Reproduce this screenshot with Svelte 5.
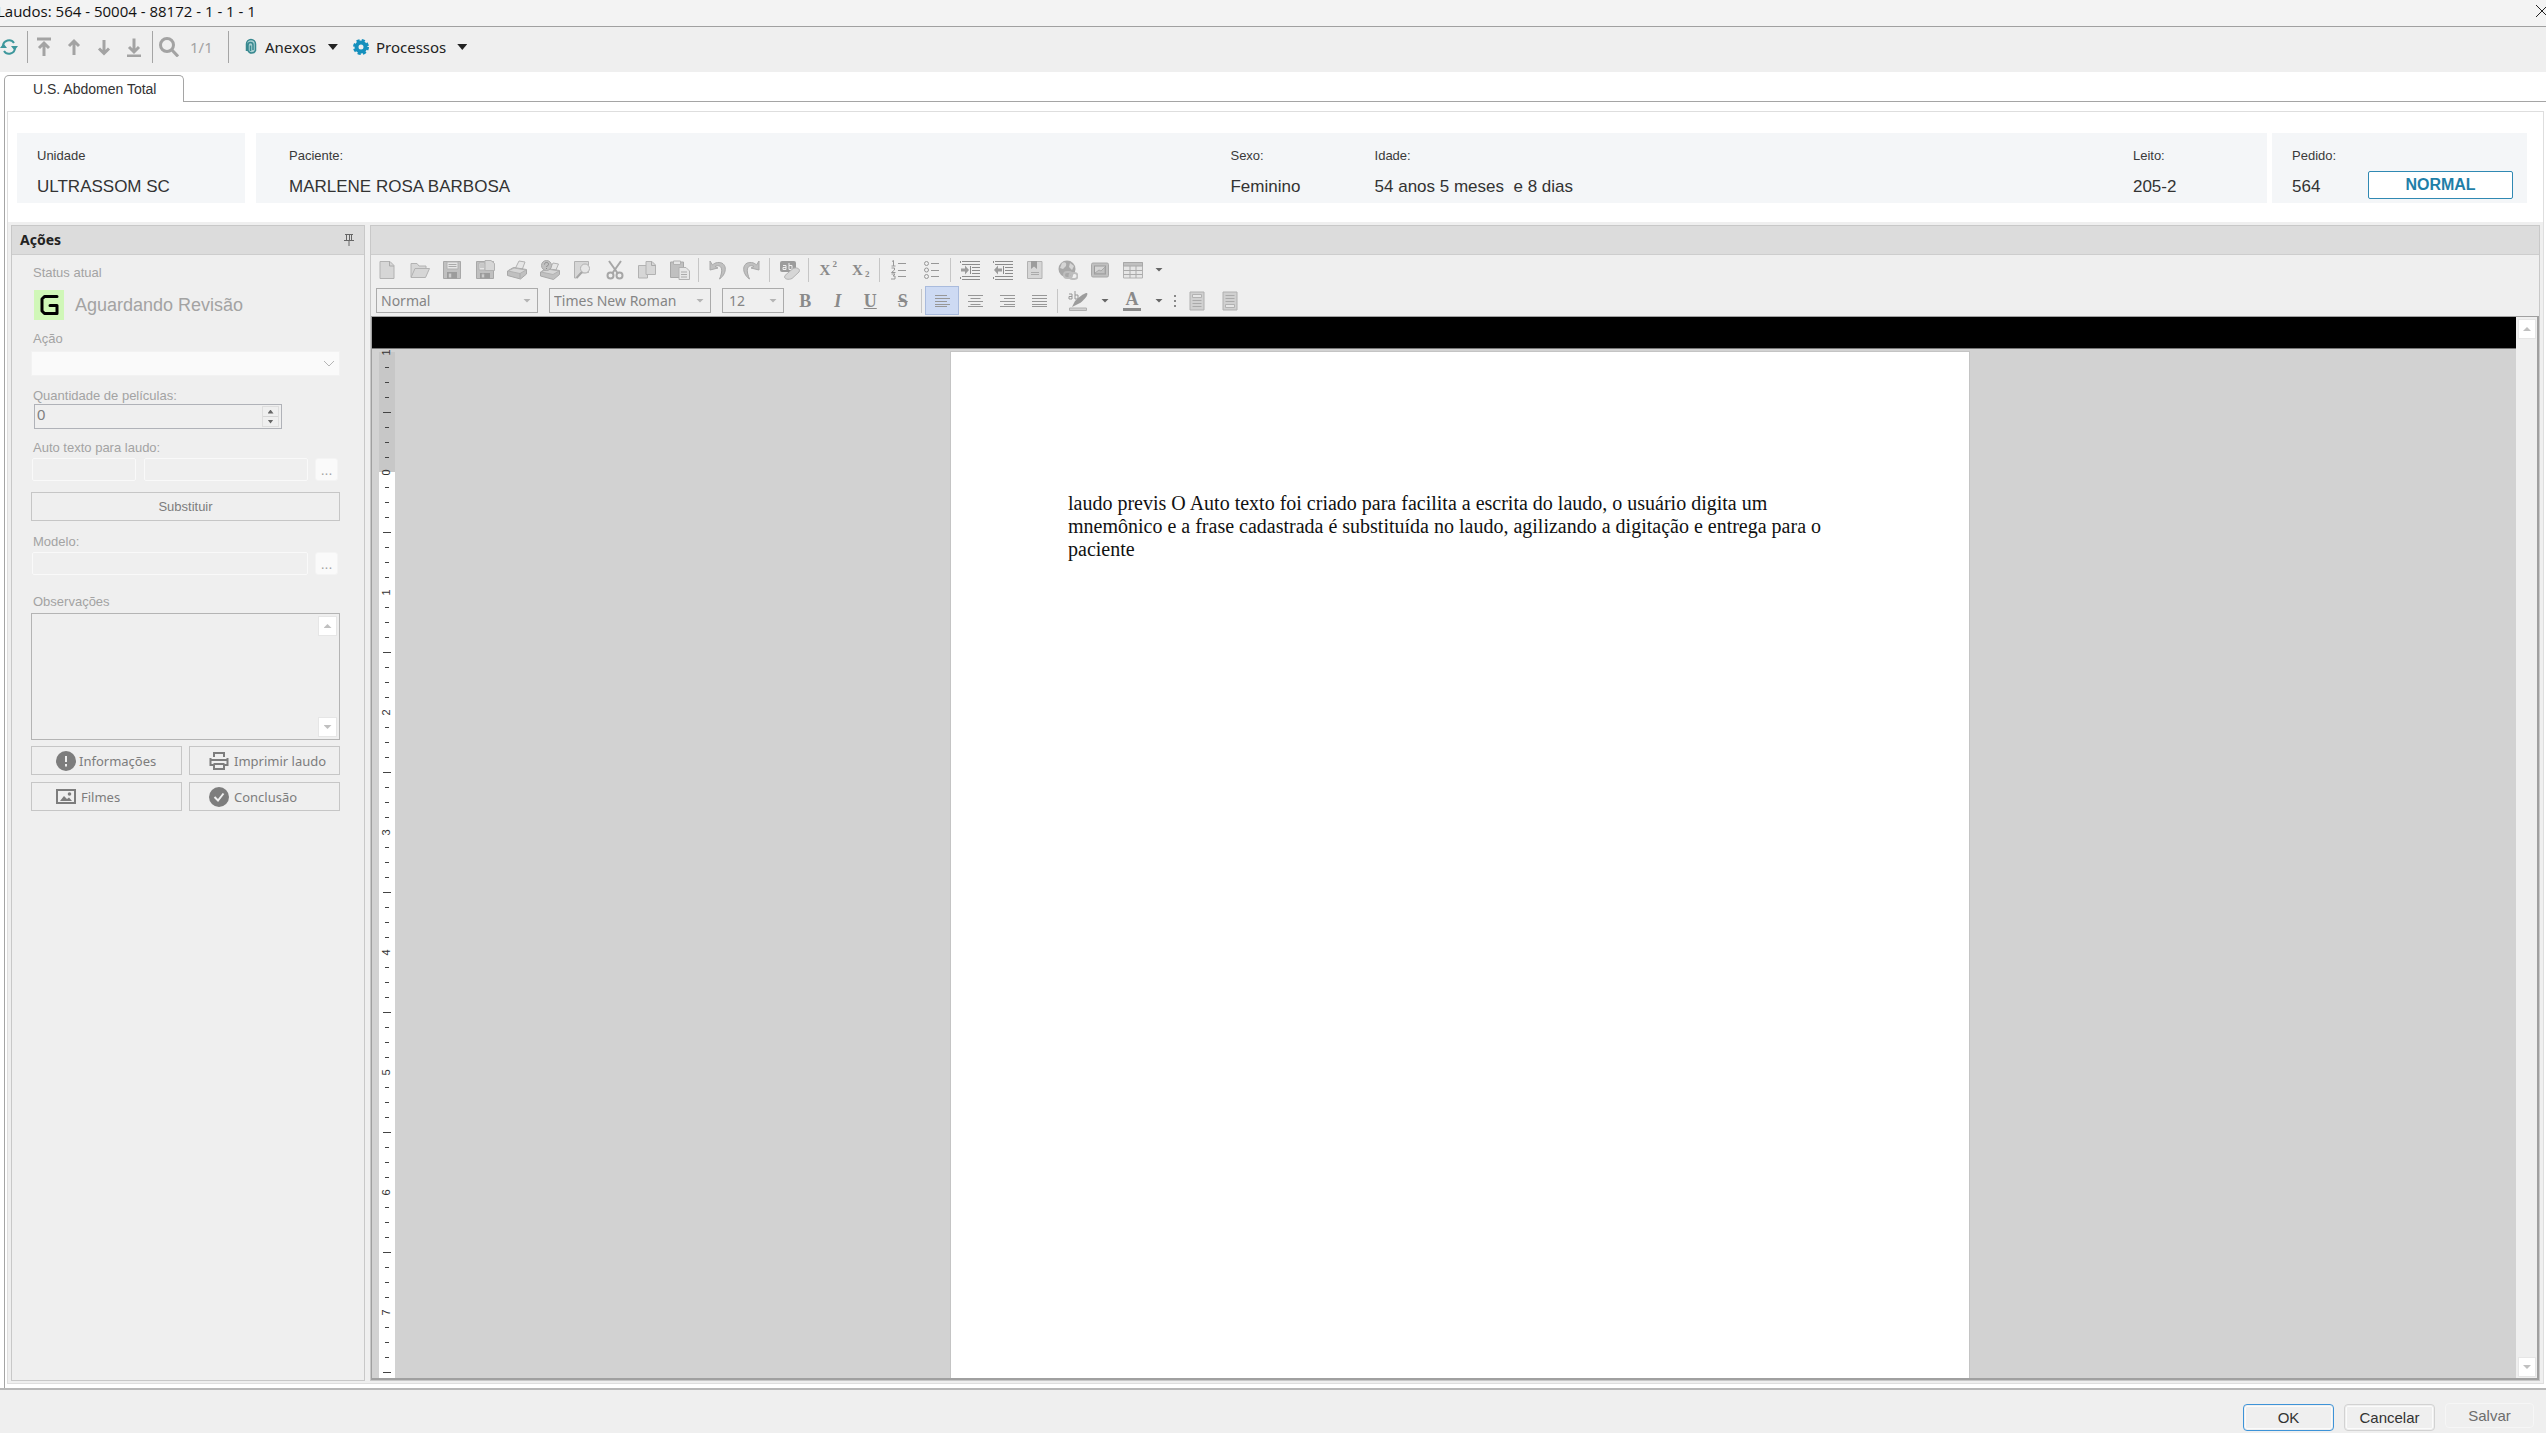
<script>
  const fileTools = [
    ['new', 'Novo'], ['open', 'Abrir'], ['save', 'Salvar documento'], ['saveas', 'Salvar como'],
    ['print', 'Imprimir'], ['quickprint', 'Impressão rápida'], ['preview', 'Visualizar'],
    ['cut', 'Recortar'], ['copy', 'Copiar'], ['paste', 'Colar']
  ];
  const insertTools = [
    ['outdent', 'Diminuir recuo'], ['indent', 'Aumentar recuo'], ['bookmark', 'Indicador'],
    ['link', 'Hiperlink'], ['image', 'Imagem'], ['table', 'Tabela']
  ];
  const aligns = [
    ['left', 'Alinhar à esquerda'], ['center', 'Centralizar'],
    ['right', 'Alinhar à direita'], ['justify', 'Justificar']
  ];
  const nav = [
    ['first', 'Primeiro'], ['prev', 'Anterior'], ['next', 'Próximo'], ['last', 'Último']
  ];
  const marks = Array.from({ length: 69 }, (_, i) => ({
    label: i % 8 === 0 ? Math.abs(i / 8 - 1) : null,
    long: i % 8 === 4
  }));

  let quantity = $state(0);
  let align = $state('left');
</script>

{#snippet icon(name)}
  <svg class="ico" viewBox="0 0 20 20" width="20" height="20" aria-hidden="true">
    {#if name === 'new'}
      <path class="lite" d="M3 1.500h10l4 4v13h-14z" /><path class="edge" d="M12.500 1.500v4.500h4.500" />
    {:else if name === 'open'}
      <path class="lite" d="M1 17V3.500h6l2 2.500h7v4" /><path class="lite" d="M1 17.500l4-9h14.500l-4 9z" />
    {:else if name === 'save'}
      <path class="mid" d="M1.500 1.500h17v17h-17z" /><path class="pale" d="M5 2h11v7h-11z" /><path class="edge" d="M6.500 4.500h8M6.500 6.500h8" /><path class="deep" d="M5 12h10v6.500h-10z" /><path class="pale" d="M7 13.500h2v4h-2z" />
    {:else if name === 'saveas'}
      <path class="mid" d="M1.500 1.500h17v17h-17z" /><path class="pale" d="M4 3h6v7h-6z" /><path class="edge" d="M5 5h4M5 7h4" /><path class="deep" d="M5 13h10v5.500h-10z" /><path class="pale" d="M7 14h2v3.500h-2z" /><path class="lite" d="M10 .5h6l3.500 3v7h-9.500z" />
    {:else if name === 'print'}
      <path class="pale" d="M8 9l4-8 6 1-3 8z" /><path class="mid" d="M.5 11l6-3.500 13 2v4.500l-6 5-13-3.500z" /><path class="lite" d="M1 11l6-3 12 2-6 3.500z" /><path class="edge" d="M13 13.500v5" />
    {:else if name === 'quickprint'}
      <path class="pale" d="M10 9l3-6 5.500 1-3 7z" /><path class="mid" d="M.5 12l6-3.500 13 2v4l-6 5-13-3.500z" /><path class="lite" d="M1 12l6-3 12 2-6 3.500z" /><circle class="mid" cx="6.500" cy="5.500" r="5" /><path class="darkline" d="M4.500 4.500c0-3 4.500-2.500 4 0 0 1.500-2 1-2 2.500M6.500 8v1" />
    {:else if name === 'preview'}
      <path class="lite" d="M2.500 1.500h14v11l-8 .5-4 5h-2z" /><circle class="pale" cx="13" cy="8.500" r="4.500" /><path class="line2" d="M10 12l-5.500 6" />
    {:else if name === 'cut'}
      <path class="line2" d="M4 1l8.500 12M16 1L7.500 13" /><circle class="line2" cx="5.500" cy="15.500" r="3" /><circle class="line2" cx="14.500" cy="15.500" r="3" />
    {:else if name === 'copy'}
      <path class="lite" d="M1.500 5.500h9v12.500h-9z" /><path class="lite" d="M9 1.500h6l3.500 3.500v9.500h-9.500z" /><path class="edge" d="M14.500 1.500v4h4" />
    {:else if name === 'paste'}
      <path class="mid" d="M.5 2h13v15.500h-13z" /><path class="pale" d="M3.500 1h7v3.500h-7z" /><path class="pale" d="M9 7.500h7l3.500 3.500v8.500h-10.500z" /><path class="edge" d="M11 12h6M11 14.500h6M11 17h6" />
    {:else if name === 'undo'}
      <path class="mid" d="M2 1v9l8-2-3-1.500c5-2.500 9.500 1 4.500 12.500C20 13 19 1.500 9.500 2.500 7.500 2.800 6 3.500 4.500 5z" />
    {:else if name === 'redo'}
      <path class="mid" d="M18 1v9l-8-2 3-1.500C8 4 3.500 7.500 8.500 19 0 13 1 1.500 10.500 2.500c2 .3 3.500 1 5 2.500z" />
    {:else if name === 'spell'}
      <rect class="deep" x="0" y="1" width="16" height="11" rx="2" /><path class="whiteline" d="M3 5.500h3v4h-3v-2h3M9 3v6.500h3v-4h-3" /><path class="lite" d="M5 15.500l8-7c3-1.500 8 0 6 3.500l-7 6.500c-3 1.500-9 1-7-3z" />
    {:else if name === 'numbers'}
      <path class="line" d="M3 1.500l1.500-1V6M2.500 6h4M2.500 8h3v2l-3 2.500h4M2.500 14h3.500l-2 2h2v3h-4M9 3.500h8M9 10.500h8M9 16.500h8" />
    {:else if name === 'bullets'}
      <circle class="line" cx="4.500" cy="3.500" r="2" /><circle class="line" cx="4.500" cy="10" r="2" /><circle class="line" cx="4.500" cy="16.500" r="2" /><path class="line" d="M9 3.500h8M9 10.500h8M9 16.500h8" />
    {:else if name === 'outdent' || name === 'indent'}
      <path class="darkline" d="M.5 1v2M.5 17v2M2 1.500h18M2 4.500h18M12 7.500h8M12 10.500h8M12 13.500h8M2 16.500h18M2 19.500h18M10.500 6v8" />
      {#if name === 'outdent'}<path class="deep" d="M1 8.500h4v-3l4 4.500-4 4.500v-3h-4z" />{:else}<path class="deep" d="M9 8.500H5v-3L1 10l4 4.500v-3h4z" />{/if}
    {:else if name === 'bookmark'}
      <path class="lite" d="M2.500 1.500h14.500v17h-14.500z" /><path class="deep" d="M6 1h6v8l-3-2.500-3 2.500z" /><path class="edge" d="M6 12.500h8M6 14.500h8" />
    {:else if name === 'link'}
      <circle class="globe" cx="9" cy="9" r="8.500" /><path class="palefill" d="M4 3c3-2 5 0 4 3l-3 3-3-1zM12 3l4 3-2 4-3-3z" /><rect class="link" x="6" y="12" width="8" height="6" rx="3" /><rect class="link" x="11.500" y="13" width="8" height="6" rx="3" />
    {:else if name === 'image'}
      <rect class="mid" x="1.500" y="3" width="17" height="14" rx="1.500" /><path class="deep" d="M4 5.500h12v9h-12z" /><path class="palefill" d="M5 6.500h10v7h-10z" /><path class="mid" d="M5 13l4-3 2 1 4-4v6.500h-10z" />
    {:else if name === 'table'}
      <path class="pale" d="M.5 2.500h19v15.500h-19z" /><path class="mid" d="M.5 2.500h19v3.500h-19z" /><path class="edge" d="M.5 10.500h19M.5 14.500h19M7 6v12M13 6v12" />
    {:else if name === 'left'}
      <path class="line" d="M3 4.500h12M3 7.500h15M3 10.500h12M3 13.500h15M3 15.500h12" />
    {:else if name === 'center'}
      <path class="line" d="M3 4.500h15M5.500 7.500h10M3 10.500h15M5.500 13.500h10M3 15.500h15" />
    {:else if name === 'right'}
      <path class="line" d="M3 4.500h15M7 7.500h11M3 10.500h15M7 13.500h11M3 15.500h15" />
    {:else if name === 'justify'}
      <path class="line" d="M3 4.500h15M3 7.500h15M3 10.500h15M3 13.500h15M3 15.500h15" />
    {:else if name === 'header'}
      <path class="leaf" d="M3 1h14v18h-14z" /><path class="pale" d="M5.500 3.500h9v3h-9z" /><path class="edge" d="M5.500 9.500h9M5.500 12.500h9M5.500 15.500h9" />
    {:else if name === 'footer'}
      <path class="leaf" d="M3 1h14v18h-14z" /><path class="pale" d="M5.500 13.500h9v3h-9z" /><path class="edge" d="M5.500 4.500h9M5.500 7.500h9M5.500 10.500h9" />
    {:else if name === 'first'}
      <path class="nav" d="M3 2h14M10 19V6M5 11l5-5 5 5" />
    {:else if name === 'prev'}
      <path class="nav" d="M10 18V4M5 9l5-5 5 5" />
    {:else if name === 'next'}
      <path class="nav" d="M10 3v13M5 11.500l5 5 5-5" />
    {:else if name === 'last'}
      <path class="nav" d="M3 19h14M10 1.500V14M5 10l5 5 5-5" />
    {:else if name === 'search'}
      <circle class="nav" cx="8" cy="8" r="6.500" /><path class="nav" d="M12.500 12.500l6.500 7" />
    {/if}
  </svg>
{/snippet}

{#snippet tool(name, label)}
  <button class="tool" type="button" aria-label={label}>{@render icon(name)}</button>
{/snippet}

<div class="window">
  <header class="title">
    <span>Laudos: 564 - 50004 - 88172 - 1 - 1 - 1</span>
    <button type="button" class="close" aria-label="Fechar">
      <svg viewBox="0 0 10 12" width="10" height="12"><path d="M0 0l12 12M12 0L0 12" /></svg>
    </button>
  </header>

  <nav class="main-tools">
    <button type="button" class="refresh" aria-label="Atualizar">
      <svg viewBox="0 0 18 16" width="18" height="16"><path d="M3 7a6 6 0 0 1 11-3M15 9a6 6 0 0 1-11 3" /><path class="solid" d="M0 9h7L3.500 4.500zM11 7h7L14.500 11.500z" /></svg>
    </button>
    <i class="bar"></i>
    <div class="navs">{#each nav as [n, l]}{@render tool(n, l)}{/each}</div>
    <i class="bar"></i>
    <button type="button" class="tool find" aria-label="Localizar">{@render icon('search')}</button>
    <span class="count">1/1</span>
    <i class="bar"></i>
    <button type="button" class="menu">
      <svg viewBox="0 0 12 18" width="12" height="18"><path d="M1.500 13V6a4.500 4.500 0 0 1 9 0v6.500a4 4 0 0 1-7.500 0V7a2.500 2.500 0 0 1 5 0v5" fill="#a9cfd1" stroke="#37888f" stroke-width="1.500" /><path d="M5.500 7.500V13" stroke="#37888f" stroke-width="1.500" /></svg>
      <span>Anexos</span><b class="caret big"></b>
    </button>
    <button type="button" class="menu">
      <svg viewBox="0 0 16 16" width="16" height="16"><circle cx="8" cy="8" r="4.500" fill="none" stroke="#1590bd" stroke-width="4" /><circle cx="8" cy="8" r="6.500" fill="none" stroke="#1590bd" stroke-width="3" stroke-dasharray="3 2.100" /></svg>
      <span>Processos</span><b class="caret big"></b>
    </button>
  </nav>

  <main class="tabs">
    <div class="tab-row"><button type="button" class="tab">U.S. Abdomen Total</button><div class="tab-line"></div></div>
    <div class="sheet">
      <div class="inner">
        <section class="info">
          <dl class="card unit"><div><dt>Unidade</dt><dd>ULTRASSOM SC</dd></div></dl>
          <dl class="card patient">
            <div><dt>Paciente:</dt><dd>MARLENE ROSA BARBOSA</dd></div>
            <div><dt>Sexo:</dt><dd>Feminino</dd></div>
            <div><dt>Idade:</dt><dd>54 anos 5 meses&nbsp; e 8 dias</dd></div>
            <div><dt>Leito:</dt><dd>205-2</dd></div>
          </dl>
          <div class="card order">
            <dl><div><dt>Pedido:</dt><dd>564</dd></div></dl>
            <button type="button" class="priority">NORMAL</button>
          </div>
        </section>

        <div class="work">
          <aside class="panel actions">
            <h2 class="panel-head">Ações
              <svg viewBox="0 0 10 12" width="10" height="12"><path d="M1 .5h8M2.500 1v5.500M7.500 1v5.500M5.500 1v5.500M0 6.500h10M5 7v5" /></svg>
            </h2>
            <div class="form">
              <p class="lbl">Status atual</p>
              <div class="status">
                <svg viewBox="0 0 30 30" width="30" height="30"><path fill="#d0f7b8" d="M0 0h30v30H0z" /><path fill="none" stroke="#000" stroke-width="3" stroke-linecap="round" stroke-linejoin="round" d="M23 6.500H10.500L8 9v12l2.500 2.500H23V15.500h-7" /></svg>
                <span>Aguardando Revisão</span>
              </div>
              <label class="lbl" for="acao">Ação</label>
              <div class="pick">
                <select id="acao"><option></option></select>
                <svg viewBox="0 0 12 8" width="12" height="8"><path d="M1 1l5 5 5-5" /></svg>
              </div>
              <label class="lbl qty-l" for="qtd">Quantidade de películas:</label>
              <div class="spin">
                <input id="qtd" type="number" bind:value={quantity} />
                <div class="steps">
                  <button type="button" aria-label="Aumentar" onclick={() => quantity++}><b class="caret up"></b></button>
                  <button type="button" aria-label="Diminuir" onclick={() => quantity--}><b class="caret"></b></button>
                </div>
              </div>
              <label class="lbl auto-l" for="auto">Auto texto para laudo:</label>
              <div class="lookup">
                <input id="auto" class="code" type="text" /><input class="desc" type="text" aria-label="Descrição do auto texto" />
                <button type="button" aria-label="Procurar auto texto">...</button>
              </div>
              <button type="button" class="flat wide">Substituir</button>
              <label class="lbl model-l" for="modelo">Modelo:</label>
              <div class="lookup"><input id="modelo" class="desc" type="text" /><button type="button" aria-label="Procurar modelo">...</button></div>
              <label class="lbl obs-l" for="obs">Observações</label>
              <div class="obs">
                <textarea id="obs"></textarea>
                <div class="scroll"><button type="button" aria-label="Rolar para cima"><b class="caret up"></b></button><button type="button" aria-label="Rolar para baixo"><b class="caret"></b></button></div>
              </div>
              <div class="grid">
                <button type="button" class="flat info-b">
                  <svg viewBox="0 0 20 20" width="20" height="20"><circle cx="10" cy="10" r="10" /><path class="w" d="M10 5v6M10 13v2.500" /></svg>Informações</button>
                <button type="button" class="flat print-b">
                  <svg viewBox="0 0 20 20" width="20" height="20"><path class="s" d="M5 6V2h10v4M1.500 15V7M18.500 15V7M1 9h18M5 12.500V18h10v-5.500M1 14h3M16 14h3M5 13h10" /></svg>Imprimir laudo</button>
                <button type="button" class="flat film-b">
                  <svg viewBox="0 0 20 20" width="20" height="20"><path class="s" d="M1 3h18v13H1z" /><path d="M4 14l4-5 3 3 2-1.500 3 3.500z" /><circle cx="13.500" cy="7" r="1.800" /></svg>Filmes</button>
                <button type="button" class="flat done-b">
                  <svg viewBox="0 0 20 20" width="20" height="20"><circle cx="10" cy="10" r="10" /><path class="w" d="M5.500 10l3.500 3.500L14.500 6.500" /></svg>Conclusão</button>
              </div>
            </div>
          </aside>

          <section class="panel editor">
            <div class="panel-head"></div>
            <div class="strip">
              <div class="g g10">{#each fileTools as [n, l]}{@render tool(n, l)}{/each}</div>
              <i class="sep"></i>
              <div class="g g2">{@render tool('undo', 'Desfazer')}{@render tool('redo', 'Refazer')}</div>
              <i class="sep"></i>
              <div class="g g1">{@render tool('spell', 'Ortografia')}</div>
              <i class="sep"></i>
              <div class="g g2">
                <button type="button" class="tool script">X<sup>2</sup></button>
                <button type="button" class="tool script">X<sub>2</sub></button>
              </div>
              <i class="sep"></i>
              <div class="g g2">{@render tool('numbers', 'Numeração')}{@render tool('bullets', 'Marcadores')}</div>
              <i class="sep"></i>
              <div class="g g6">{#each insertTools as [n, l]}{@render tool(n, l)}{/each}</div>
              <button type="button" class="drop" aria-label="Mais opções de tabela"><b class="caret"></b></button>
            </div>
            <div class="strip second">
              <div class="combo"><select aria-label="Estilo"><option>Normal</option></select><b class="caret soft"></b></div>
              <div class="combo"><select aria-label="Fonte"><option>Times New Roman</option></select><b class="caret soft"></b></div>
              <div class="combo size"><select aria-label="Tamanho"><option>12</option></select><b class="caret soft"></b></div>
              <div class="g g4 letters">
                <button type="button" class="tool"><b>B</b></button>
                <button type="button" class="tool"><em>I</em></button>
                <button type="button" class="tool"><u>U</u></button>
                <button type="button" class="tool"><s>S</s></button>
              </div>
              <i class="sep"></i>
              <div class="g g4">
                {#each aligns as [n, l]}
                  <button type="button" class="tool" class:on={align === n} aria-label={l} onclick={() => (align = n)}>{@render icon(n)}</button>
                {/each}
              </div>
              <i class="sep"></i>
              <button type="button" class="tool mark" aria-label="Realce">
                <svg viewBox="0 0 20 20" width="20" height="20"><path class="line" d="M1 3h3v5H1V5.500h3M7 0v8h3V4H7" /><path class="deep" d="M19 2c2 2-4 8-7 10l-8 4 3-6c3-3 10-9 12-8z" /><path class="leaf" d="M1.500 17h17v2.500h-17z" /></svg>
              </button>
              <button type="button" class="drop" aria-label="Cores de realce"><b class="caret"></b></button>
              <button type="button" class="tool color"><span>A</span></button>
              <button type="button" class="drop" aria-label="Cores da fonte"><b class="caret"></b></button>
              <svg class="dots" viewBox="0 0 4 14" width="4" height="14"><path d="M1 1h2v2H1zM1 6h2v2H1zM1 11h2v2H1z" /></svg>
              <div class="g g2">{@render tool('header', 'Cabeçalho')}{@render tool('footer', 'Rodapé')}</div>
            </div>
            <div class="canvas">
              <div class="view">
                <div class="black"></div>
                <div class="stage">
                  <div class="ruler">
                    {#each marks as m}
                      <div class="m" class:long={m.long}>{#if m.label !== null}<span>{m.label}</span>{:else}<i></i>{/if}</div>
                    {/each}
                  </div>
                  <div class="desk">
                    <article class="page" contenteditable="true" spellcheck="false">
                      <p>laudo previs O Auto texto foi criado para facilita a escrita do laudo, o usuário digita um<br />mnemônico e a frase cadastrada é substituída no laudo, agilizando a digitação e entrega para o<br />paciente</p>
                    </article>
                  </div>
                </div>
              </div>
              <div class="scroll tall"><button type="button" aria-label="Página acima"><b class="caret up"></b></button><button type="button" aria-label="Página abaixo"><b class="caret"></b></button></div>
            </div>
          </section>
        </div>
      </div>
    </div>
  </main>

  <footer>
    <button type="button" class="ok">OK</button>
    <button type="button">Cancelar</button>
    <button type="button" class="off">Salvar</button>
  </footer>
</div>

<style>
  :global(body) { margin: 0; overflow: hidden; }
  * { box-sizing: border-box; }
  .window { display: flex; flex-direction: column; height: 100vh; background: #efefef; font: 14px/16px "Liberation Sans", Arial, sans-serif; color: #333; }
  button, input, select, textarea { font: inherit; color: inherit; background: none; border: 0; padding: 0; margin: 0; border-radius: 0; min-width: 0; outline: none; }
  select { appearance: none; }
  h2, p, dl, dt, dd { margin: 0; font-weight: normal; }
  svg { display: block; flex: none; }

  .title { display: flex; justify-content: space-between; align-items: center; height: 27px; flex: none; background: #f3f3f3; border-bottom: 1px solid #a0a0a0; color: #111; font: 15px/22px "Open Sans", sans-serif; padding-bottom: 5px; }
  .title span { margin-left: -3px; }
  .close path { stroke: #222; fill: none; }

  .main-tools { display: flex; align-items: center; height: 45px; flex: none; padding-bottom: 5px; font: 15px/20px "Noto Sans", sans-serif; color: #222; }
  .refresh { width: 27px; }
  .refresh path { fill: none; stroke: #3d979c; stroke-width: 2; }
  .refresh .solid { fill: #3d979c; stroke: none; }
  .bar { width: 1px; height: 32px; background: #a5a5a5; }
  .navs { display: flex; width: 124px; padding: 0 3px 0 1px; }
  .navs .tool { flex: 1; }
  .find { margin-left: 6px; }
  .count { color: #a3a3a3; width: 49px; padding-left: 11px; }
  .menu { display: flex; align-items: center; gap: 8px; margin-left: 16px; }
  .menu + .menu { gap: 7px; margin-left: 15px; }
  .menu .caret { margin-left: 4px; }

  .caret { display: block; width: 8px; height: 4px; background: #666; clip-path: polygon(0 0, 100% 0, 50% 100%); }
  .caret.up { clip-path: polygon(50% 0, 100% 100%, 0 100%); }
  .caret.big { width: 10px; height: 6px; background: #222; }
  .caret.soft { background: #b4b4b4; }

  .tabs { flex: 1; min-height: 0; display: flex; flex-direction: column; background: #fff; padding: 3px 0 0 4px; border-bottom: 2px solid #b8b8b8; }
  .tab-row { display: flex; height: 27px; flex: none; }
  .tab { width: 180px; border: 1px solid #a5a5a5; border-bottom: 0; border-radius: 5px 5px 0 0; text-align: left; padding-left: 28px; }
  .tab-line { flex: 1; border-bottom: 1px solid #a5a5a5; }
  .sheet { flex: 1; min-height: 0; display: flex; border-left: 1px solid #a5a5a5; padding: 9px 2px 4px 2px; }
  .inner { flex: 1; min-width: 0; display: flex; flex-direction: column; border: 1px solid #dedede; }

  .info { display: flex; padding: 21px 16px 19px 9px; flex: none; }
  .card { background: #f4f6f8; height: 70px; padding-top: 15px; }
  .card dt { height: 16px; color: #3a3a3a; font-size: 13px; }
  .card dd { margin-top: 13px; font-size: 17px; line-height: 20px; color: #333; white-space: nowrap; }
  .unit { width: 228px; padding-left: 20px; margin-right: 11px; }
  .patient { flex: 1; display: grid; grid-template-columns: 941fr 144fr 758fr 134fr; padding-left: 33px; margin-right: 5px; }
  .order { width: 255px; display: flex; justify-content: space-between; padding: 15px 14px 0 20px; }
  .priority { width: 145px; height: 28px; margin-top: 23px; background: #fff; border: 1px solid #3089b3; border-radius: 2px; color: #1f7fa8; font: bold 16px/20px "Liberation Sans", sans-serif; }

  .work { flex: 1; min-height: 0; display: flex; gap: 5px; padding: 3px 3px 2px; background: #efefef; }
  .panel { border: 1px solid #c8c8c8; display: flex; flex-direction: column; min-height: 0; }
  .panel-head { display: flex; justify-content: space-between; align-items: center; height: 29px; flex: none; background: #dcdcdc; border-bottom: 1px solid #cdcdcd; padding: 0 10px 0 8px; font: bold 14px/20px "Noto Sans", sans-serif; color: #222; }
  .panel-head path { fill: none; stroke: #666; }
  .actions { width: 354px; flex: none; }

  .form { display: flex; flex-direction: column; padding: 10px 24px 0 19px; color: #a3a3a3; }
  .lbl { display: block; height: 16px; padding-left: 2px; font-size: 13px; }
  .status { display: flex; align-items: center; gap: 11px; padding: 9px 0 11px 3px; font-size: 18px; }
  .pick { display: flex; align-items: center; height: 25px; margin-top: 4px; background: #fafafa; border: 1px solid #f2f2f2; padding-right: 4px; }
  .pick select { flex: 1; height: 100%; }
  .pick path { fill: none; stroke: #b5b5b5; stroke-width: 1; }
  .qty-l { margin-top: 12px; }
  .spin { display: flex; width: 248px; height: 25px; margin: 0 0 0 3px; border: 1px solid #b0b2b8; padding: 1px; color: #7f7f7f; }
  .spin input { flex: 1; appearance: textfield; padding: 0 0 4px 1px; font-size: 15px; }
  .spin input::-webkit-inner-spin-button { display: none; }
  .steps { display: flex; flex-direction: column; width: 17px; margin-right: 1px; border: 1px solid #dedede; }
  .steps button { flex: 1; display: flex; align-items: center; justify-content: center; }
  .steps button + button { border-top: 1px solid #d5d5d5; }
  .steps .caret { width: 6px; }
  .auto-l { margin-top: 11px; }
  .lookup { display: flex; padding: 2px 2px 0 1px; height: 25px; }
  .lookup input { border: 1px solid #f9f9f9; border-radius: 2px; height: 23px; }
  .lookup .code { width: 104px; margin-right: 8px; }
  .lookup .desc { flex: 1; }
  .lookup button { width: 23px; height: 23px; margin-left: 7px; background: #fafafa; border: 1px solid #f4f4f4; border-radius: 3px; }
  .flat { display: flex; align-items: center; height: 29px; border: 1px solid #c6c6c6; color: #7d7d7d; }
  .flat svg { fill: #7d7d7d; }
  .flat .w { fill: none; stroke: #efefef; stroke-width: 2; }
  .flat .s { fill: none; stroke: #7d7d7d; stroke-width: 2; }
  .wide { justify-content: center; margin-top: 11px; font-size: 13px; }
  .model-l { margin-top: 13px; }
  .obs-l { margin-top: 19px; }
  .obs { display: flex; height: 127px; margin-top: 3px; border: 1px solid #b4b4b4; padding: 2px; }
  .obs textarea { flex: 1; resize: none; }
  .scroll { width: 19px; display: flex; flex-direction: column; justify-content: space-between; }
  .scroll button { height: 20px; background: #fff; border: 1px solid #e6e6e6; display: flex; align-items: center; justify-content: center; }
  .scroll .caret { background: #c0c0c0; }
  .grid { display: grid; grid-template-columns: 1fr 1fr; gap: 7px 7px; margin-top: 6px; }
  .info-b { padding-left: 24px; gap: 3px; }
  .film-b { padding-left: 24px; gap: 5px; }
  .print-b, .done-b { padding-left: 19px; gap: 5px; }
  .grid .flat { font: 13px/16px "Noto Sans", sans-serif; }

  .editor { flex: 1; min-width: 0; }
  .strip { display: flex; align-items: center; height: 29px; flex: none; color: #8a8a8a; }
  .second { height: 32px; padding: 2px 0 1px 5px; }
  .g { display: flex; height: 100%; }
  .g1 { width: 33px; } .g2 { width: 65px; } .g4 { width: 130px; } .g6 { width: 195px; } .g10 { width: 325px; }
  .g .tool { flex: 1; }
  .tool { display: flex; align-items: center; justify-content: center; }
  .tool.on { background: #cddaf3; border: 1px solid #a9bbdd; }
  .sep { width: 1px; height: 24px; background: #c6c6c6; margin: 0 3px 0 2px; }
  .drop { width: 20px; height: 24px; display: flex; align-items: center; justify-content: center; }
  .script { font: bold 15px/20px "Liberation Serif", serif; }
  .script sup, .script sub { font-size: 9px; line-height: 9px; margin-left: 2px; }
  .script sup { padding-bottom: 10px; } .script sub { padding-top: 10px; }
  .letters { margin: 0 0 0 5px; font: 18px/22px "Liberation Serif", serif; }
  .letters em, .letters s, .letters u { font-weight: bold; }
  .combo { display: flex; align-items: center; width: 162px; height: 25px; border: 1px solid #ababab; padding: 0 6px 0 4px; margin-right: 11px; font: 14px/20px "Noto Sans", sans-serif; color: #858585; }
  .combo select { flex: 1; }
  .combo.size { width: 62px; margin-right: 0; padding-left: 6px; }
  .mark { width: 34px; }
  .color { width: 34px; font: bold 18px/18px "Liberation Serif", serif; }
  .color span { border-bottom: 3px solid #8a8a8a; width: 18px; }
  .dots { margin: 0 4px; fill: #888; }

  .lite { fill: #d6d6d6; stroke: #b2b2b2; }
  .pale { fill: #e6e6e6; stroke: #b2b2b2; }
  .palefill { fill: #d5d5d5; }
  .mid { fill: #c0c0c0; stroke: #a8a8a8; }
  .leaf { fill: #d0d0d0; stroke: #b0b0b0; }
  .globe { fill: #a8a8a8; }
  .deep { fill: #9c9c9c; }
  .edge { fill: none; stroke: #aaa; }
  .line { fill: none; stroke: #979797; }
  .darkline { fill: none; stroke: #8c8c8c; }
  .line2 { fill: none; stroke: #a6a6a6; stroke-width: 2; }
  .whiteline { fill: none; stroke: #eee; }
  .link { fill: none; stroke: #bdbdbd; stroke-width: 2; }
  .nav { fill: none; stroke: #a3a3a3; stroke-width: 3; }

  .canvas { flex: 1; min-height: 0; display: flex; border: 1px solid #a0a0a0; border-width: 1px 2px 2px 1px; }
  .view { flex: 1; min-width: 0; display: flex; flex-direction: column; background: #d2d2d2; }
  .black { height: 32px; flex: none; background: #000; border-bottom: 1px solid #777; }
  .stage { flex: 1; min-height: 0; display: flex; overflow: hidden; padding-left: 7px; }
  .ruler { width: 16px; flex: none; background: linear-gradient(#d2d2d2 3px, #c7c7c7 3px, #c7c7c7 123px, #fff 123px); font-size: 11px; line-height: 12px; color: #333; overflow: hidden; }
  .m { height: 15px; display: flex; align-items: center; justify-content: center; }
  .m:first-child { height: 11px; padding-bottom: 4px; }
  .m i { width: 4px; height: 1px; background: #444; }
  .m.long i { width: 8px; }
  .m span { transform: rotate(-90deg); padding-bottom: 3px; }
  .desk { flex: 1; display: flex; justify-content: center; padding: 2px 0 0; }
  .page { width: 1020px; margin-left: 9px; background: #fff; border: 1px solid #c4c4c4; border-bottom: 0; padding: 140px 0 0 117px; font: 20px/23px "Liberation Serif", "Times New Roman", serif; color: #111; outline: none; white-space: nowrap; }
  .tall { width: 21px; background: #efefef; padding: 2px 1px 1px 2px; }

  footer { display: flex; justify-content: flex-end; flex: none; gap: 10px; padding: 14px 12px 2px; height: 43px; }
  footer button { width: 91px; height: 27px; border: 1px solid #d2d2d2; border-radius: 4px; background: #efefef; outline: 1px solid #fbfbfb; outline-offset: -3px; font-size: 15px; }
  footer .ok { border: 1px solid #3d93d8; }
  footer .off { width: 89px; height: 25px; margin-top: -1px; border-color: #f6f6f6; outline: none; color: #6d6d6d; }
</style>
